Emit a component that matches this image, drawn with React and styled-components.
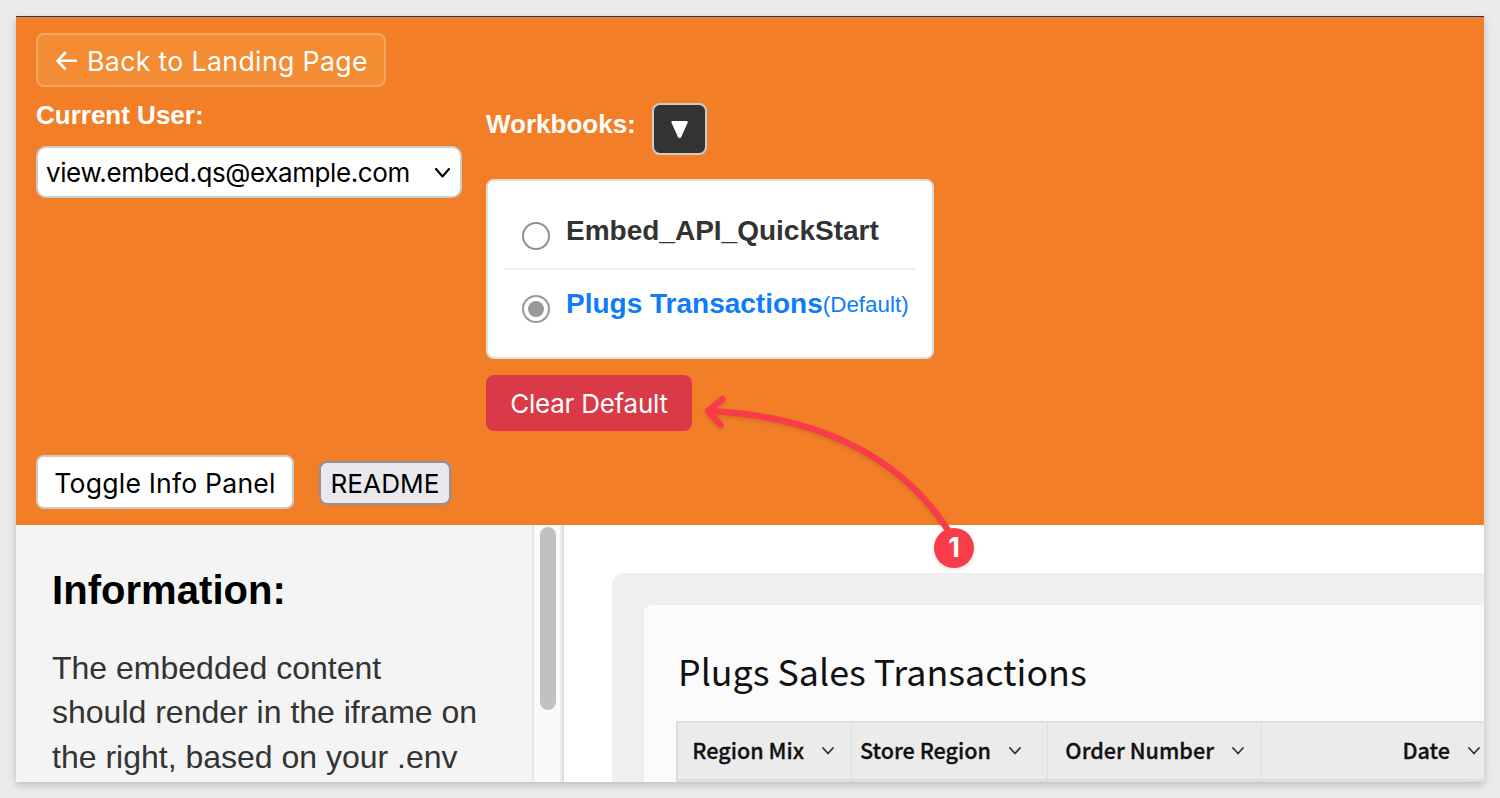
import React from "react";
import styled, { createGlobalStyle } from "styled-components";

const helvetica = `"Liberation Sans", Arial, sans-serif`;
const system = `Inter, "Liberation Sans", sans-serif`;
const source = `"Noto Sans CJK SC", "Noto Sans", sans-serif`;

const GlobalStyle = createGlobalStyle`
  * { box-sizing: border-box; }
  body { margin: 0; background: #ebebeb; overflow: hidden; font-family: ${helvetica}; }
  button { margin: 0; padding: 0; font-family: ${system}; white-space: nowrap; }
`;

const Page = styled.div`
  height: 798px;
  padding: 16px;
  position: relative;
`;
const Window = styled.main`
  height: 766px;
  display: flex;
  flex-direction: column;
  overflow: hidden;
  border-top: 1px solid #1c3a82;
  background: #fff;
  box-shadow: 0 3px 7px rgba(0, 0, 0, 0.16), 0 4px 16px rgba(0, 0, 0, 0.04);
`;
const Header = styled.header`
  flex: none;
  height: 508px;
  padding: 16px 20px;
  display: flex;
  flex-direction: column;
  align-items: flex-start;
  background: #f27f27;
`;
const BackButton = styled.button`
  width: 350px;
  height: 54px;
  display: flex;
  align-items: center;
  padding: 2px 0 0 18px;
  gap: 9px;
  border: 2px solid #f7a664;
  border-radius: 8px;
  background: #f48c34;
  color: #fff;
  font-size: 26.7px;
  letter-spacing: 0.34px;
`;
const Controls = styled.div`
  display: flex;
  gap: 24px;
  height: 368px;
`;
const UserField = styled.div`
  width: 426px;
  padding-top: 13px;
`;
const Label = styled.div`
  color: #fff;
  font-size: 26px;
  line-height: 30px;
  font-weight: 700;
`;
const Select = styled.div`
  margin-top: 16px;
  height: 52px;
  display: flex;
  align-items: center;
  justify-content: space-between;
  padding: 1px 10px 0 8px;
  border: 2px solid #ccc;
  border-radius: 10px;
  background: #fff;
  color: #000;
  font-family: ${system};
  font-size: 26px;
  letter-spacing: -0.4px;
`;
const Workbooks = styled.div`
  padding-top: 16px;
  display: flex;
  flex-direction: column;
  align-items: flex-start;
`;
const WorkbooksHead = styled.div`
  display: flex;
  gap: 16px;
  height: 52px;
`;
const WorkbooksLabel = styled(Label)`
  width: 150px;
  padding-top: 6px;
`;
const CollapseButton = styled.button`
  width: 55px;
  height: 52px;
  display: grid;
  place-items: center;
  border: 2px solid #ccc;
  border-radius: 8px;
  background: #333;
`;
const WorkbookList = styled.div`
  width: 448px;
  height: 180px;
  margin: 24px 0 16px;
  padding: 14px 16px;
  border: 2px solid #ddd;
  border-radius: 8px;
  background: #fff;
`;
const WorkbookRow = styled.div`
  height: ${(p) => (p.$divided ? 75 : 73)}px;
  display: flex;
  padding: ${(p) => (p.$divided ? 19 : 17)}px 0 0 18px;
  border-bottom: ${(p) => (p.$divided ? "2px solid #eee" : "0")};
`;
const Radio = styled.span`
  flex: none;
  width: 28px;
  height: 28px;
  margin: 8px 16px 0 0;
  padding: 4px;
  border: 2px solid ${(p) => (p.$checked ? "#999" : "#8f8f9d")};
  border-radius: 50%;
  background: ${(p) => (p.$checked ? "#999" : "#fff")};
  background-clip: content-box;
`;
const WorkbookName = styled.span`
  padding-top: 1px;
  color: ${(p) => (p.$active ? "#0d7cfb" : "#333")};
  font-size: 28px;
  line-height: 32px;
  font-weight: 700;
  white-space: nowrap;
`;
const DefaultTag = styled.span`
  font-size: 22.4px;
  font-weight: 400;
  vertical-align: 1px;
`;
const ClearButton = styled.button`
  width: 206px;
  height: 56px;
  border: 0;
  border-radius: 8px;
  background: #da3a48;
  color: #fff;
  font-size: 26px;
  letter-spacing: -0.25px;
`;
const Actions = styled.div`
  height: 54px;
  display: flex;
  align-items: center;
  gap: 25px;
`;
const ToggleButton = styled.button`
  width: 258px;
  height: 54px;
  padding-top: 1px;
  border: 2px solid #ccc;
  border-radius: 8px;
  background: #fff;
  color: #000;
  font-size: 26.6px;
  letter-spacing: 0.2px;
`;
const ReadmeButton = styled.button`
  width: 132px;
  height: 44px;
  margin-top: 2px;
  border: 2px solid #8f8f9d;
  border-radius: 8px;
  background: #e9e9ed;
  color: #000;
  font-size: 26.2px;
`;
const Body = styled.div`
  flex: 1;
  min-height: 0;
  display: flex;
`;
const InfoPanel = styled.aside`
  flex: none;
  width: 518px;
  padding: 42px 36px 0;
  overflow: hidden;
  border-right: 2px solid #e6e6e6;
  background: #f4f4f4;
`;
const InfoTitle = styled.h3`
  margin: 0;
  font-size: 40px;
  line-height: 46px;
  letter-spacing: 0.05px;
`;
const InfoText = styled.p`
  margin: 33px 0 0;
  color: #333;
  font-size: 32px;
  line-height: 44.4px;
  white-space: nowrap;
`;
const ScrollTrack = styled.div`
  flex: none;
  width: 28px;
  padding: 2px 0 0 6px;
  border-right: 2px solid #ededed;
  background: #fafafa;
`;
const ScrollThumb = styled.div`
  width: 16px;
  height: 183px;
  border-radius: 8px;
  background: #c1c1c1;
`;
const Frame = styled.section`
  flex: 1;
  min-width: 0;
  padding: 48px 0 0 48px;
  border-left: 2px solid #ddd;
`;
const Canvas = styled.div`
  height: 100%;
  padding: 32px 0 0 32px;
  border-top-left-radius: 12px;
  background: #efefef;
`;
const Sheet = styled.div`
  height: 100%;
  padding: 37px 0 0 32px;
  border-top-left-radius: 8px;
  background: #fbfbfb;
  font-family: ${source};
  color: #111;
`;
const SheetTitle = styled.div`
  height: 79px;
  padding-left: 2px;
  font-size: 35.8px;
  line-height: 56px;
  white-space: nowrap;
`;
const TableHead = styled.div`
  height: 61px;
  display: flex;
  border: solid #dedede;
  border-width: 2px 0 3px 2px;
  background: #ebebeb;
`;
const HeadCell = styled.div`
  flex: none;
  width: ${(p) => p.$width}px;
  padding: 0 ${(p) => p.$right}px 0 0;
  display: flex;
  align-items: center;
  justify-content: flex-end;
  gap: 18px;
  border-right: 1px solid #dedede;
  font-size: 21.6px;
  font-weight: 500;
  white-space: nowrap;
  -webkit-text-stroke: 0.3px #111;
`;
const HeadLabel = styled.span`
  padding-bottom: 4px;
`;
const Annotation = styled.svg`
  position: absolute;
  left: 690px;
  top: 380px;
  filter: drop-shadow(0 2px 2px rgba(0, 0, 0, 0.12));
`;
const StepBadge = styled.div`
  position: absolute;
  left: 934px;
  top: 528px;
  width: 40px;
  height: 40px;
  padding-bottom: 1px;
  border-radius: 50%;
  background: #f83c49;
  color: #fff;
  display: grid;
  place-items: center;
  font: 700 27px/1 ${system};
  box-shadow: 0 2px 4px rgba(0, 0, 0, 0.1);
`;

const Chevron = ({ w = 12, h = 8, stroke = "#333", sw = 1.8 }) => (
  <svg width={w} height={h} fill="none" stroke={stroke} strokeWidth={sw} strokeLinecap="round" strokeLinejoin="round">
    <path d={`M1 1 L${w / 2} ${h - 1.5} L${w - 1} 1`} />
  </svg>
);

const columns = [
  { name: "Region Mix", width: 174, right: 17 },
  { name: "Store Region", width: 196, right: 26 },
  { name: "Order Number", width: 214, right: 17 },
  { name: "Date", width: 224, right: 5 },
];

export default function App() {
  return (
    <Page>
      <GlobalStyle />
      <Window>
        <Header>
          <BackButton>
            <svg width="22" height="20" fill="none" stroke="#fff" strokeWidth="2.6" strokeLinecap="round" strokeLinejoin="round">
              <path d="M9 2 L1.5 9.8 L9 17.6 M2 9.8 H19.8" />
            </svg>
            Back to Landing Page
          </BackButton>
          <Controls>
            <UserField>
              <Label>Current User:</Label>
              <Select>
                view.embed.qs@example.com
                <Chevron w={15} h={10} stroke="#000" sw={2.1} />
              </Select>
            </UserField>
            <Workbooks>
              <WorkbooksHead>
                <WorkbooksLabel>Workbooks:</WorkbooksLabel>
                <CollapseButton>
                  <svg width="18" height="19" fill="#fff" stroke="#fff" strokeWidth="2.4" strokeLinejoin="round">
                    <path d="M1.6 2.2 H15.6 L9 16.8 H8.2 Z" />
                  </svg>
                </CollapseButton>
              </WorkbooksHead>
              <WorkbookList>
                <WorkbookRow $divided>
                  <Radio />
                  <WorkbookName>Embed_API_QuickStart</WorkbookName>
                </WorkbookRow>
                <WorkbookRow>
                  <Radio $checked />
                  <WorkbookName $active>
                    Plugs Transactions<DefaultTag>(Default)</DefaultTag>
                  </WorkbookName>
                </WorkbookRow>
              </WorkbookList>
              <ClearButton>Clear Default</ClearButton>
            </Workbooks>
          </Controls>
          <Actions>
            <ToggleButton>Toggle Info Panel</ToggleButton>
            <ReadmeButton>README</ReadmeButton>
          </Actions>
        </Header>
        <Body>
          <InfoPanel>
            <InfoTitle>Information:</InfoTitle>
            <InfoText>
              The embedded content<br />
              should render in the iframe on<br />
              the right, based on your .env
            </InfoText>
          </InfoPanel>
          <ScrollTrack>
            <ScrollThumb />
          </ScrollTrack>
          <Frame>
            <Canvas>
              <Sheet>
                <SheetTitle>Plugs Sales Transactions</SheetTitle>
                <TableHead>
                  {columns.map((c) => (
                    <HeadCell key={c.name} $width={c.width} $right={c.right}>
                      <HeadLabel>{c.name}</HeadLabel>
                      <Chevron />
                    </HeadCell>
                  ))}
                </TableHead>
              </Sheet>
            </Canvas>
          </Frame>
        </Body>
      </Window>
      <Annotation width="290" height="180" fill="none" stroke="#f83c49" strokeWidth="6.4" strokeLinecap="round" strokeLinejoin="round">
        <path d="M18.5 31 C130 36 214 78 261 155" />
        <path d="M32.5 19 L18.2 31 L30.6 44.8" />
      </Annotation>
      <StepBadge>1</StepBadge>
    </Page>
  );
}
